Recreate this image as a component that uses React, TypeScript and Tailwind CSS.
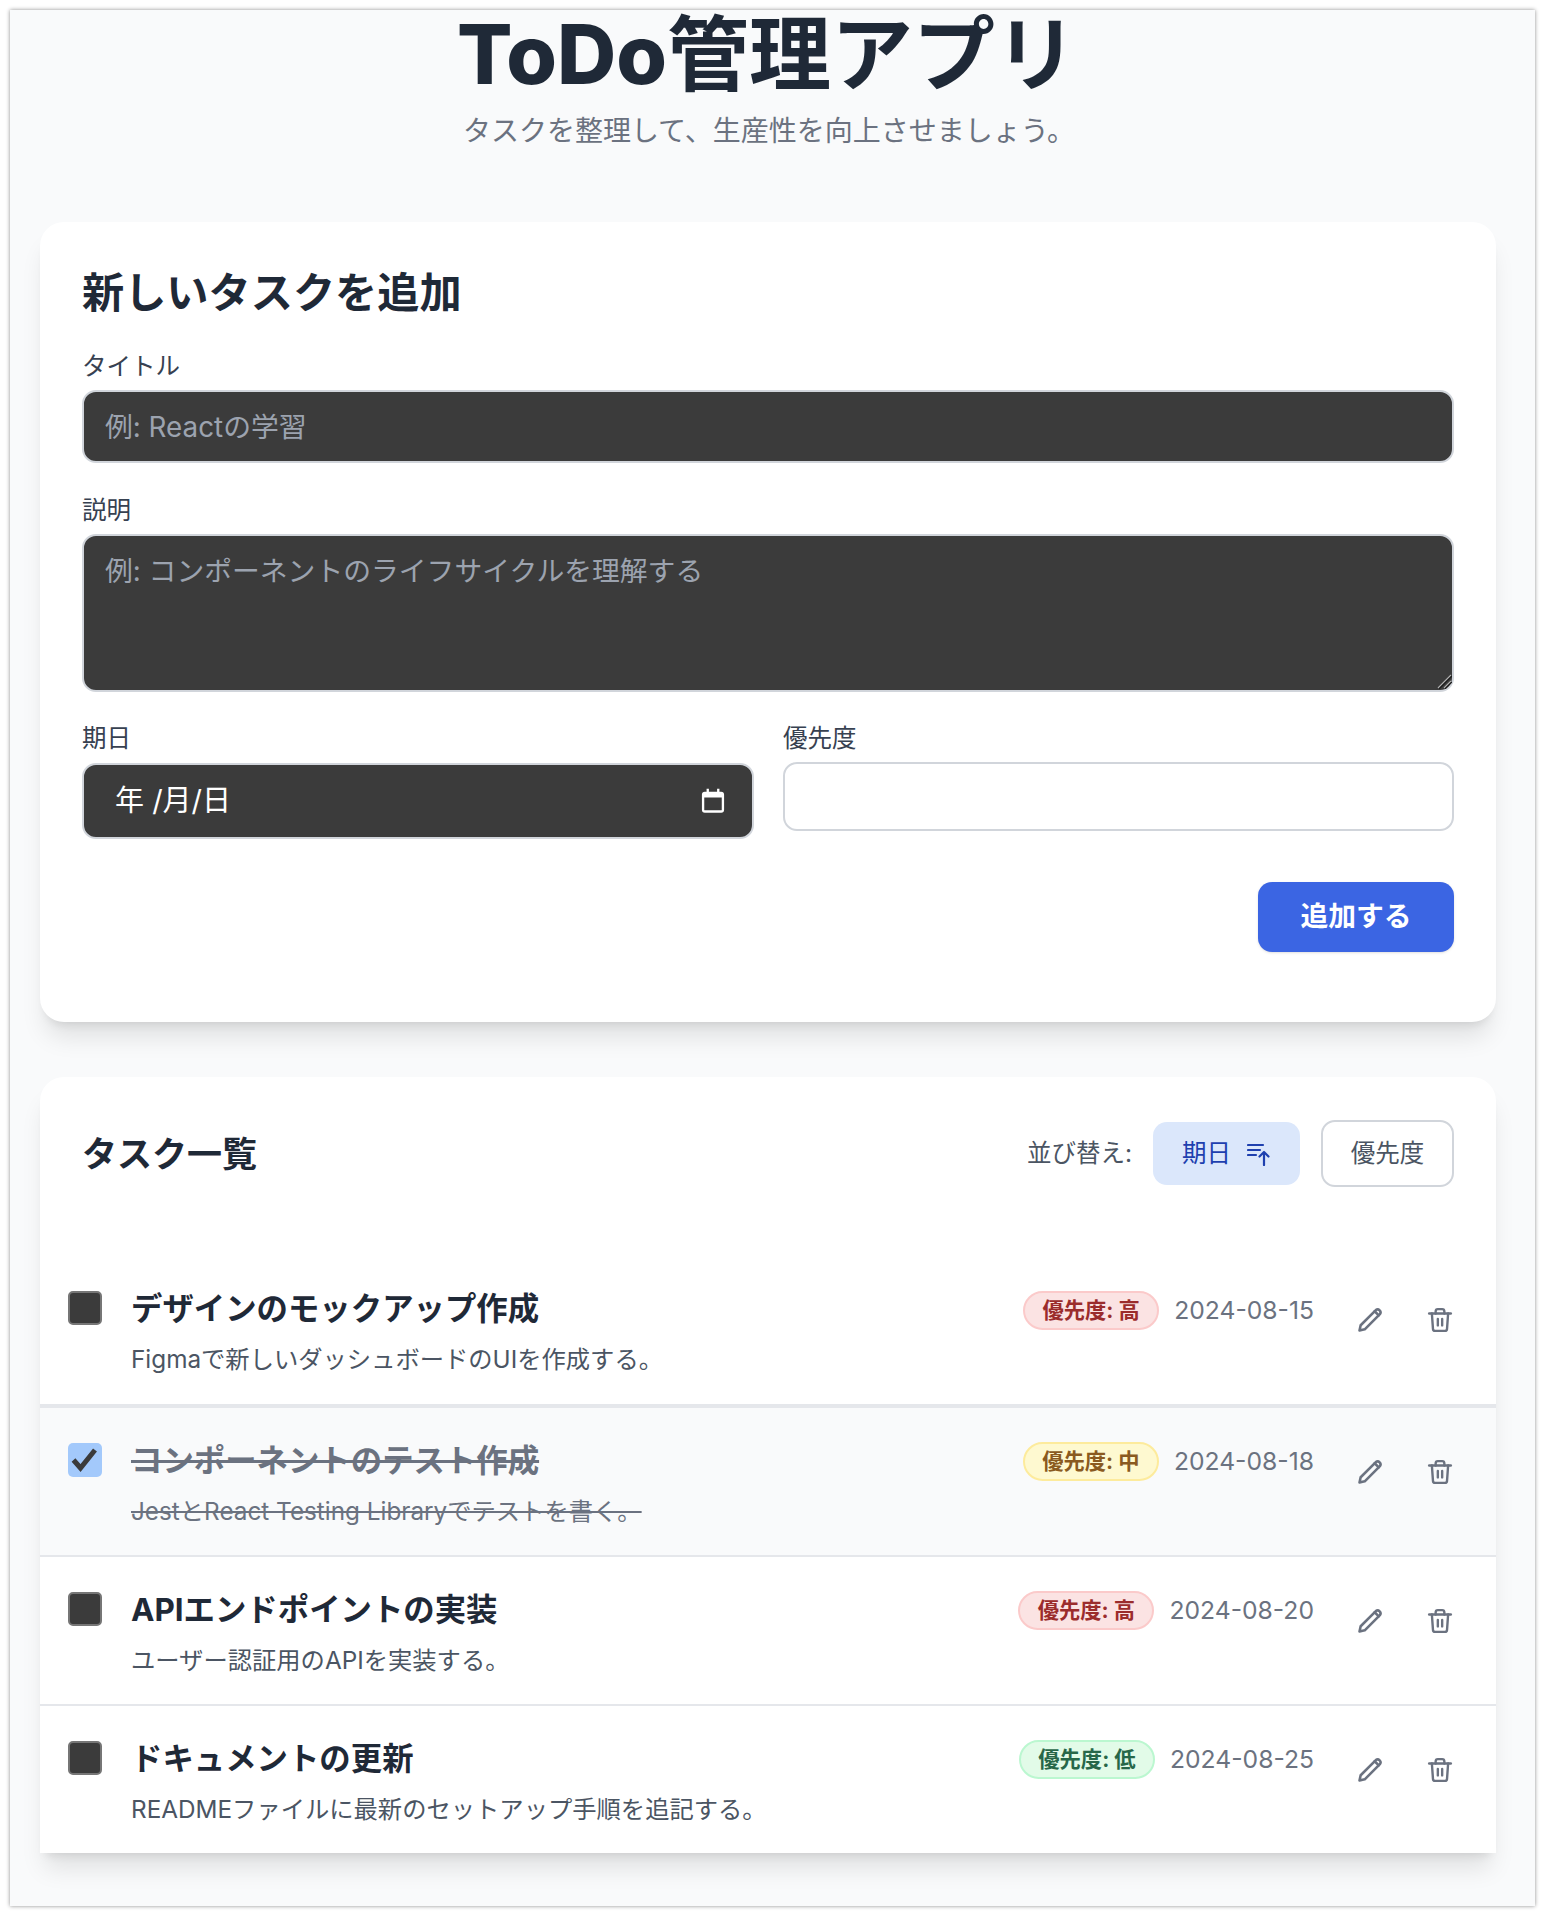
const font = "font-['Inter','Noto_Sans_CJK_JP',sans-serif]";

function SortIcon() {
  return (
    <svg width="24" height="24" viewBox="0 0 24 24" fill="none" stroke="currentColor" strokeWidth="2.2" strokeLinecap="round" strokeLinejoin="round">
      <path d="M1 3h15M1 8h12M1 13h8" />
      <path d="M17 23V10M12.5 14.5 17 10l4.5 4.5" />
    </svg>
  );
}

function PencilIcon() {
  return (
    <svg width="28" height="28" viewBox="0 0 24 24" fill="none" stroke="currentColor" strokeWidth="2.2" strokeLinecap="round" strokeLinejoin="round">
      <path d="M4 16.5 17 3.5a2.5 2.5 0 0 1 3.5 3.5L7.5 20 3 21z" />
      <path d="m16 4.5 3.5 3.5" />
    </svg>
  );
}

function TrashIcon() {
  return (
    <svg width="26" height="26" viewBox="0 0 24 24" fill="none" stroke="currentColor" strokeWidth="2.2" strokeLinecap="round" strokeLinejoin="round">
      <path d="M2 6h20" />
      <path d="M4.5 6l1 14a2 2 0 0 0 2 2h9a2 2 0 0 0 2-2l1-14" />
      <path d="M8 6V4a2 2 0 0 1 2-2h4a2 2 0 0 1 2 2v2" />
      <path d="M10 11v6M14 11v6" />
    </svg>
  );
}

function CalendarIcon() {
  return (
    <svg width="28" height="28" viewBox="0 0 24 24" fill="none" stroke="white" strokeWidth="2">
      <rect x="3.5" y="5" width="17" height="16" rx="1.5" />
      <path d="M3.5 7.5h17" strokeWidth="3" />
      <path d="M7.5 1.5v3.5M16.5 1.5v3.5" />
    </svg>
  );
}

type Priority = "高" | "中" | "低";
const badgeClass: Record<Priority, string> = {
  高: "bg-[#fbe3e3] border-[#fbcaca] text-[#9b2c2c]",
  中: "bg-[#fef9d0] border-[#fdeb9c] text-[#8a5a20]",
  低: "bg-[#e2fbe8] border-[#bbf7d0] text-[#276749]",
};

const tasks: { title: string; desc: string; p: Priority; date: string; done?: boolean }[] = [
  { title: "デザインのモックアップ作成", desc: "Figmaで新しいダッシュボードのUIを作成する。", p: "高", date: "2024-08-15" },
  { title: "コンポーネントのテスト作成", desc: "JestとReact Testing Libraryでテストを書く。", p: "中", date: "2024-08-18", done: true },
  { title: "APIエンドポイントの実装", desc: "ユーザー認証用のAPIを実装する。", p: "高", date: "2024-08-20" },
  { title: "ドキュメントの更新", desc: "READMEファイルに最新のセットアップ手順を追記する。", p: "低", date: "2024-08-25" },
];

const rowBox = [
  "h-[150px] border-b-2 border-[#e5e7eb]",
  "h-[151px] border-y-2 border-[#e5e7eb] bg-[#f9fafb]",
  "h-[149px] border-b-2 border-[#e5e7eb]",
  "h-[147px]",
];

function TaskRow({ t, i }: { t: (typeof tasks)[number]; i: number }) {
  return (
    <div className={`flex items-start pt-[35px] pl-[28px] pr-[42px] ${rowBox[i]}`}>
      {t.done ? (
        <div className="w-[34px] h-[34px] shrink-0 rounded-[5px] bg-[#a3c9fb]">
          <svg width="34" height="34" viewBox="0 0 34 34" fill="none" stroke="#3b3b3b" strokeWidth="5">
            <path d="M5.5 17l7 8L27 7" />
          </svg>
        </div>
      ) : (
        <div className="w-[34px] h-[34px] shrink-0 rounded-[5px] bg-[#3b3b3b] border-2 border-[#767676]" />
      )}
      <div className="ml-[29px] flex-1 min-w-0">
        <div className={`text-[31.4px] leading-[36px] font-bold ${t.done ? "text-[#6b7280] line-through" : "text-[#1f2937]"}`}>{t.title}</div>
        <div className={`mt-[16px] text-[24.3px] leading-[32px] ${t.done ? "text-[#6b7280] line-through" : "text-[#4b5563]"}`}>{t.desc}</div>
      </div>
      <div className={`flex items-center gap-[15px] ${i > 0 ? "-mt-[1px]" : ""}`}>
        <span className={`h-[39px] w-[136px] flex items-center justify-center rounded-full border-2 text-[21.3px] font-bold ${badgeClass[t.p]}`}>
          優先度: {t.p}
        </span>
        <span className="text-[24.7px] leading-[39px] text-[#6b7280]">{t.date}</span>
      </div>
      <div className="ml-[42px] mt-[15px] flex gap-[42px] text-[#6b7280]">
        <div className="w-[28px] h-[28px] flex items-center justify-center"><PencilIcon /></div>
        <div className="w-[28px] h-[28px] flex items-center justify-center"><TrashIcon /></div>
      </div>
    </div>
  );
}

export default function App() {
  return (
    <div className={`bg-white pl-[10px] pr-[9px] py-[10px] ${font}`}>
      <div className="h-[1896px] bg-[#f9fafb] shadow-[0_0_4px_rgba(0,0,0,0.45)] pl-[30px] pr-[39px] overflow-hidden">
        <header className="text-center">
          <h1 className="text-[82px] leading-[90px] font-bold text-[#1f2937] -translate-x-[1px]"><span className="font-extrabold">ToDo</span>管理アプリ</h1>
          <p className="mt-[11px] text-[28px] leading-[40px] text-[#6b7280] translate-x-[1px]">タスクを整理して、生産性を向上させましょう。</p>
        </header>

        <section className="mt-[71px] bg-white rounded-[24px] shadow-xl px-[42px] pt-[43px] pb-[70px]">
          <h2 className="text-[42.2px] leading-[56px] font-bold text-[#1f2937]">新しいタスクを追加</h2>
          <label className="block mt-[29px] mb-[8px] text-[24.5px] leading-[32px] text-[#374151]">タイトル</label>
          <input
            placeholder="例: Reactの学習"
            className="block w-full h-[73px] px-[21px] rounded-[14px] border-2 border-[#d1d5db] bg-[#3b3b3b] text-[27.8px] text-white placeholder:text-[#9ca3af] outline-none"
          />
          <label className="block mt-[31px] mb-[8px] text-[24.5px] leading-[32px] text-[#374151]">説明</label>
          <div className="relative">
            <textarea
              placeholder="例: コンポーネントのライフサイクルを理解する"
              className="block w-full h-[158px] px-[21px] py-[15px] rounded-[14px] border-2 border-[#d1d5db] bg-[#3b3b3b] text-[27.8px] leading-[40px] text-white placeholder:text-[#9ca3af] outline-none resize-none"
            />
            <svg className="absolute right-[2px] bottom-[3px]" width="15" height="15" viewBox="0 0 15 15" fill="none" strokeWidth="1.2">
              <path d="M1 14 14 1M7 14l7-7" stroke="#b0b0b0" />
              <path d="M2 15 15 2M8 15l7-7" stroke="#1c1c1c" />
            </svg>
          </div>
          <div className="mt-[30px] flex gap-[29px] items-start">
            <div className="w-[672px]">
              <label className="block mb-[9px] text-[24.5px] leading-[32px] text-[#374151]">期日</label>
              <div className="h-[76px] pl-[31px] pr-[25px] flex items-center justify-between rounded-[14px] border-2 border-[#d1d5db] bg-[#3b3b3b] text-[29px] text-white">
                <span>年 /月/日</span>
                <CalendarIcon />
              </div>
            </div>
            <div className="flex-1">
              <label className="block mb-[8px] text-[24.5px] leading-[32px] text-[#374151]">優先度</label>
              <div className="h-[69px] rounded-[14px] border-2 border-[#d1d5db] bg-white" />
            </div>
          </div>
          <div className="mt-[43px] flex justify-end">
            <button className="w-[196px] h-[70px] rounded-[14px] bg-[#3b65e3] text-white text-[27.8px] font-bold shadow-sm">追加する</button>
          </div>
        </section>

        <section className="mt-[55px] bg-white rounded-t-[24px] shadow-xl">
          <div className="h-[179px] pl-[42px] pr-[42px] pt-[43px] flex items-start justify-between">
            <h2 className="text-[35px] leading-[69px] font-bold text-[#1f2937]">タスク一覧</h2>
            <div className="flex items-center">
              <span className="text-[24.5px] text-[#4b5563]">並び替え:</span>
              <div className="ml-[21px] w-[147px] h-[63px] flex items-center justify-center gap-[16px] rounded-[14px] bg-[#dbe7fb] text-[24.5px] text-[#1e40af]">
                期日
                <SortIcon />
              </div>
              <div className="ml-[21px] w-[133px] h-[67px] flex items-center justify-center rounded-[14px] border-2 border-[#d1d5db] bg-white text-[24.5px] text-[#4b5563]">優先度</div>
            </div>
          </div>
          <div>
            {tasks.map((t, i) => (
              <TaskRow key={t.title} t={t} i={i} />
            ))}
          </div>
        </section>
      </div>
    </div>
  );
}
